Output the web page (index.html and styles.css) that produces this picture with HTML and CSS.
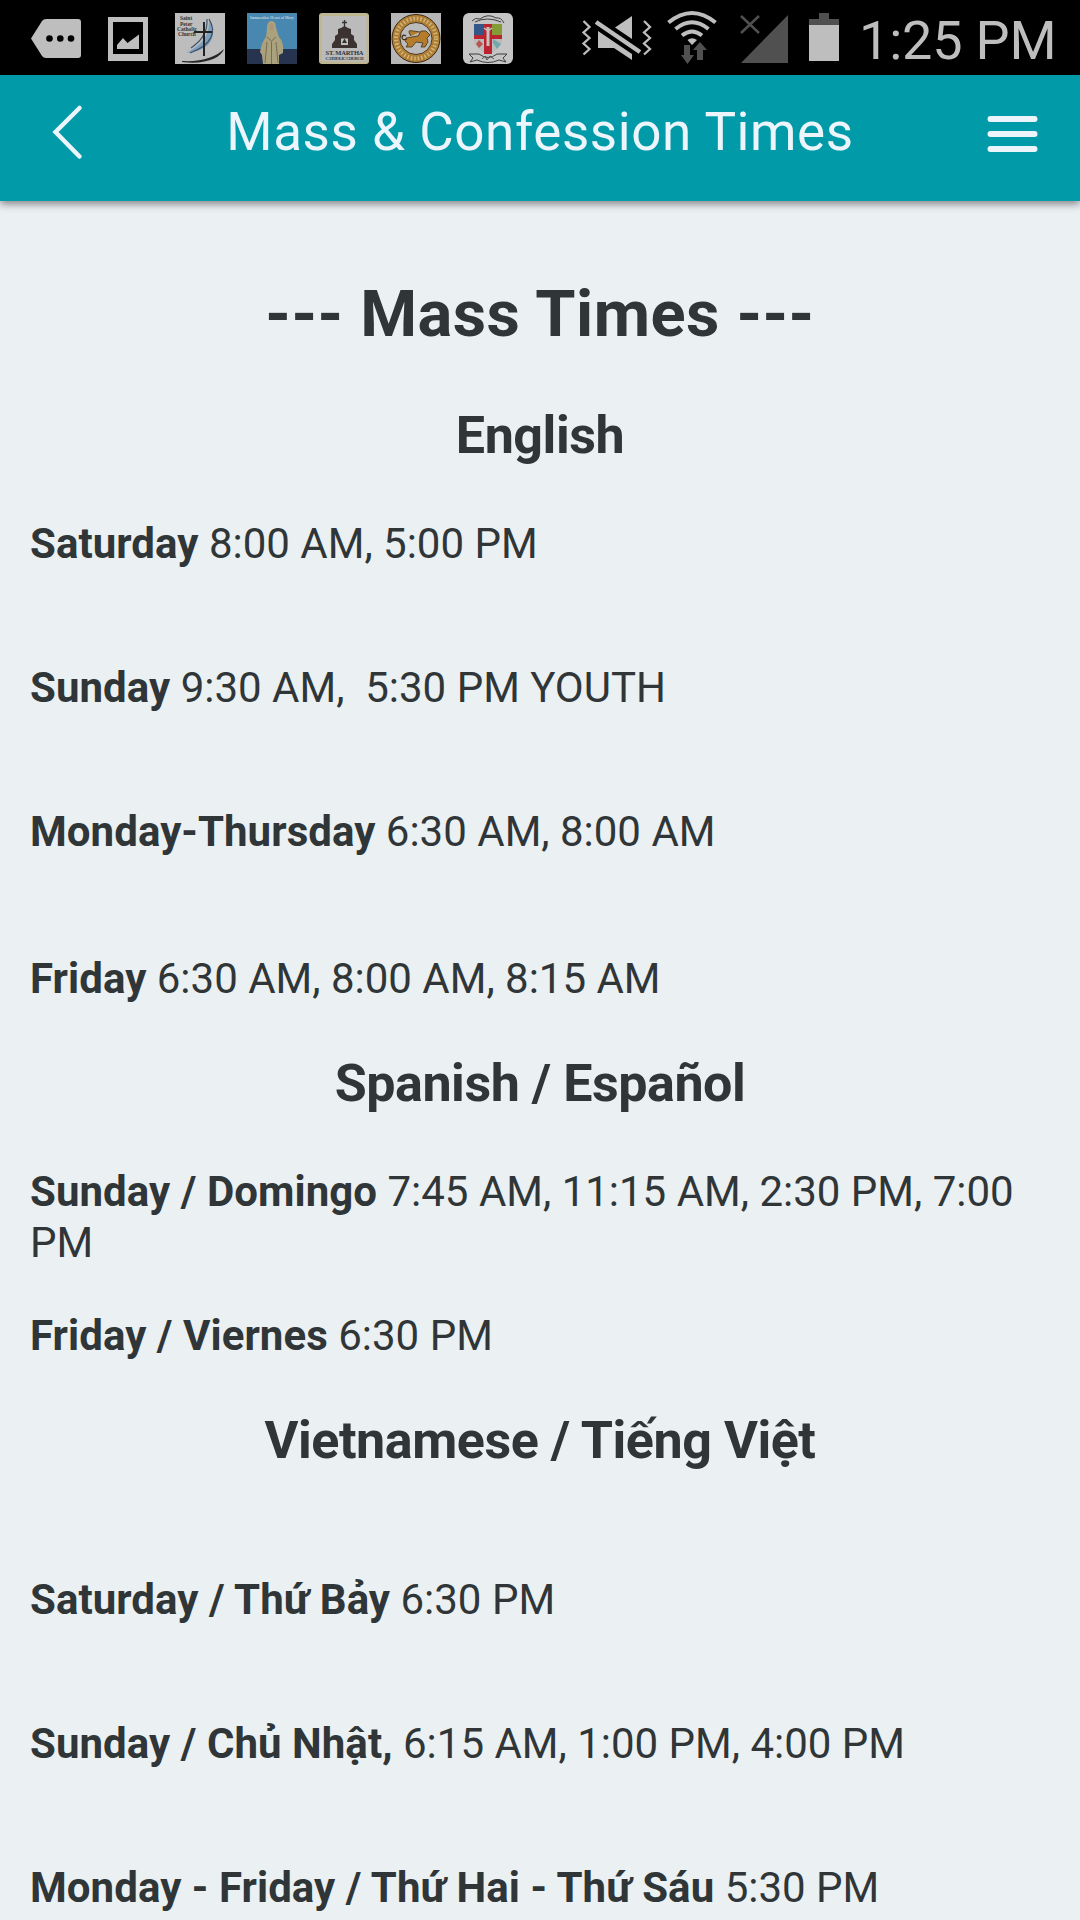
FILE: index.html
```html
<!DOCTYPE html>
<html lang="en">
<head>
<meta charset="utf-8">
<title>Mass &amp; Confession Times</title>
<link rel="stylesheet" href="styles.css">
</head>
<body>
<div class="status">
  <svg class="notices" viewBox="0 0 520 75" width="520" height="75">
    <path d="M31 38.500L42 21Q43.500 19 46 19H78Q81 19 81 22V55Q81 58 78 58H46Q43.500 58 42 56Z" fill="#bebebe"/>
    <g fill="#000"><circle cx="49.500" cy="38.500" r="3.300"/><circle cx="60.300" cy="38.500" r="3.300"/><circle cx="71" cy="38.500" r="3.300"/></g>
    <rect x="108" y="17" width="40" height="44" fill="#bebebe"/><rect x="113" y="22" width="30" height="32" fill="#000"/>
    <path d="M117 49V45L123 38L127.500 43L139 34.500V49Z" fill="#bebebe"/>

    <rect x="175" y="13" width="50" height="51" fill="#bdbdbd"/>
    <g class="serif peter" fill="#333"><text x="180" y="20">Saint</text><text x="180" y="25.500">Peter</text><text x="177" y="30.500">Catholic</text><text x="178" y="36">Church</text></g>
    <path d="M209 18C210 36 202 45 186 53C194 52 202 50 208 45C216 36 213 26 209 18Z" fill="#7c9fbe"/>
    <path d="M207 19C208 35 198 43 191 48M209 19C217 32 212 45 190 53" fill="none" stroke="#3c5268" stroke-width="1.200"/>
    <path d="M204 22V56M194 32H212" stroke="#222" stroke-width="2"/>
    <path d="M182 61C202 62 216 57 224 49C221 58 205 65 182 62Z" fill="#252525"/>

    <rect x="247" y="13" width="50" height="36" fill="#4787b0"/><rect x="247" y="49" width="50" height="15" fill="#26344f"/>
    <text class="serif mary" x="250" y="19" fill="#b9d1dc">Immaculate Heart of Mary</text>
    <path d="M267 28Q267 21 271.500 21Q276 21 276 28L279 37Q284 42 283 53L279 55V64H263L262 55L260 52Q262 41 266 37Z" fill="#aaa17e"/>
    <ellipse cx="271.500" cy="27" rx="2.200" ry="3.500" fill="#ad9573"/><path d="M267 37L271.500 41L276 37M267 42L265 63M276 42L278 63M271.500 42V64" fill="none" stroke="#776e50"/>

    <rect x="319" y="13" width="50" height="51" rx="3" fill="#beb591"/><rect x="321.500" y="16" width="45" height="45.500" fill="#bbb"/>
    <path d="M332 48V44L335 40V36L338 34V29L341 28L344.500 26L348 28L351 29V34L354 36V40L357 44V48Z" fill="#3d3232"/><path d="M344.500 20V28M342 22.500H347" stroke="#333" stroke-width="1.300"/><path d="M341 45V38.500H348V45Z" fill="#c1c1bc"/><path d="M344.500 38.500L347 43H342Z" fill="#333"/>
    <g class="serif" fill="#333"><text class="martha" x="325.500" y="55" textLength="38">ST. MARTHA</text><text class="church" x="325.500" y="60" textLength="38">CATHOLIC CHURCH</text></g>

    <rect x="391" y="13" width="50" height="51" fill="#b6b6b6"/><circle cx="416" cy="38.500" r="24" fill="#af7d33" stroke="#3c2b18"/>
    <circle cx="416" cy="38.500" r="20" fill="none" stroke="#d0b57b" stroke-width="4" stroke-dasharray="1.500 2"/><circle cx="416" cy="38.500" r="16" fill="#bbb" stroke="#4e381e"/>
    <path d="M406 38L418 36L421 31H426L430 35L427 38L428 42L425 47H421L423 43L416 42L412 47H406L408 44L405 41ZM411 36Q406 29 413 31L420 32" fill="#b47c2b" stroke="#423019" stroke-width=".8"/><path d="M407 39Q402 41 402 37Q403 34 406 36" fill="none" stroke="#423019" stroke-width="1.300"/>

    <rect x="463" y="13" width="50" height="51" rx="6" fill="#c5c5c5"/>
    <path d="M474 24H502V42Q500 49 488 55Q476 49 474 42Z" fill="#bbb"/><path d="M474 24H484V35H474Z" fill="#345789"/><path d="M492 24H502V35H492Z" fill="#839c36"/><path d="M493 39L501 44L497 49L493 43Z" fill="#72a7ac"/><path d="M484 24H492V35H502V39H492V54H484V39H474V35H484Z" fill="#ba2430"/>
    <path d="M476 44L479 40L483 44L479 48Z" fill="#b75451"/><path d="M488 27V46" stroke="#c9c2bc" stroke-width="3"/><path d="M484 28L488 31L492 28" fill="none" stroke="#c9c2bc" stroke-width="1.500"/>
    <path d="M472 21Q475 17 480 19Q488 13 496 18Q501 17 504 23M475 22Q487 16 501 22M469 54L479 54Q488 61 497 54H507L503 58L506 62L499 60Q488 65 477 60L470 62L473 58Z" fill="none" stroke="#3d3d3d" stroke-width="1"/><path d="M482 59L485 56L487 60L490 56L494 59" fill="none" stroke="#555"/>
  </svg>
  <svg class="signals" viewBox="560 0 290 75" width="290" height="75">
    <g fill="none" stroke="#bebebe" stroke-width="2.300"><path d="M583.500 21L589.500 27L583.500 32.500L589.500 38L583.500 43.500L589.500 49L583.500 54.500"/><path d="M644 21L650 27L644 32.500L650 38L644 43.500L650 49L644 54.500"/></g>
    <path d="M615 27.500L632 16V39ZM598 31L632 54V60L614 48H598Z" fill="#bebebe"/><path d="M596 22L640 52" stroke="#bebebe" stroke-width="4.500"/>
    <g fill="none" stroke="#bebebe" stroke-width="4"><path d="M668.500 22.500Q692 3.500 715.500 22.500"/><path d="M675.500 29Q692 15.500 708.500 29"/><path d="M682 35.500Q692 27.500 702 35.500"/></g><path d="M687.500 40Q692 36.500 697 40L692 45Z" fill="#bebebe"/>
    <path d="M684 45H690V55H694L687.500 64L681 55H684ZM697 60V50H693L700 42L707 50H703V60Z" fill="#505050"/>
    <path d="M741 63L788 15V63Z" fill="#505050"/><path d="M741 16L759 33M759 16L741 33" stroke="#505050" stroke-width="2.500"/>
    <path d="M819 13H829V19H839V25H809V19H819Z" fill="#505050"/><rect x="809" y="25" width="30" height="36" fill="#bebebe"/>
  </svg>
  <span class="clock">1:25 PM</span>
</div>
<header class="bar">
  <svg width="50" height="60" viewBox="40 100 50 60"><path d="M79.500 108L55.500 132L79.500 156.500" class="line back"/></svg>
  <h1 class="bar-title">Mass &amp; Confession Times</h1>
  <svg width="60" height="60" viewBox="980 106 60 60"><path d="M990.500 119H1034.500M990.500 134H1034.500M990.500 149H1034.500" class="line menu"/></svg>
</header>
<main class="content">
  <h2>--- Mass Times ---</h2>
  <h3>English</h3>
  <div class="times spaced">
    <p><b>Saturday</b> 8:00 AM, 5:00 PM</p>
    <p><b>Sunday</b> 9:30 AM,&nbsp; 5:30 PM YOUTH</p>
    <p><b>Monday-Thursday</b> 6:30 AM, 8:00 AM</p>
    <p class="last"><b>Friday</b> 6:30 AM, 8:00 AM, 8:15 AM</p>
  </div>
  <h3>Spanish / Español</h3>
  <div class="times">
    <p><b>Sunday / Domingo</b> 7:45 AM, 11:15 AM, 2:30 PM, 7:00 PM</p>
    <p><b>Friday / Viernes</b> 6:30 PM</p>
  </div>
  <h3>Vietnamese / Tiếng Việt</h3>
  <div class="times spaced vietnamese">
    <p><b>Saturday / Thứ Bảy</b> 6:30 PM</p>
    <p><b>Sunday / Chủ Nhật,</b> 6:15 AM, 1:00 PM, 4:00 PM</p>
    <p><b>Monday - Friday / Thứ Hai - Thứ Sáu</b> 5:30 PM</p>
  </div>
</main>
</body>
</html>
```
FILE: styles.css
```css
* { box-sizing: border-box; }
body { margin: 0; width: 1080px; height: 1920px; overflow: hidden; display: flex; flex-direction: column; background: #ebf0f3; color: #303637; font-family: Roboto, sans-serif; }
h1, h2, h3, p { margin: 0; }
.status { height: 75px; flex: none; display: flex; background: #000; color: #bebebe; }
.notices, .signals { flex: none; }
.signals { margin-left: 40px; }
.clock { margin-left: 9px; padding-top: 8px; font-size: 54px; line-height: 66px; font-weight: 400; letter-spacing: -.2px; white-space: nowrap; }
.serif { font-family: "Liberation Serif", serif; font-weight: bold; }
.peter { font-size: 5.5px; }
.mary { font-size: 3.8px; }
.martha { font-size: 6.5px; }
.church { font-size: 4.3px; }
.bar { height: 126px; flex: none; display: flex; justify-content: space-between; padding: 25px 40px 0; background: #009aa8; color: #ebf5fb; box-shadow: 0 3px 8px rgba(0, 0, 0, .45); }
.bar svg:last-child { margin-top: 6px; }
.bar-title { padding: 1px 0 0 10px; font-size: 53px; line-height: 62px; font-weight: 400; letter-spacing: .55px; white-space: nowrap; }
.line { fill: none; stroke: #ebf5fb; stroke-linecap: round; }
.back { stroke-width: 4.5px; }
.menu { stroke-width: 6px; }
.content { padding: 75px 30px 0; font-size: 42px; line-height: 51px; }
h2 { margin-bottom: 52px; text-align: center; font-size: 65px; line-height: 77px; letter-spacing: .45px; }
h3 { text-align: center; font-size: 52px; line-height: 62px; letter-spacing: -.45px; }
b { letter-spacing: .06px; }
.times { display: flex; flex-direction: column; gap: 42px; padding: 51px 0 49px; }
.spaced .last { margin-top: 3px; }
.times.spaced { gap: 93px; }
.times.vietnamese { padding-top: 102px; }
```
